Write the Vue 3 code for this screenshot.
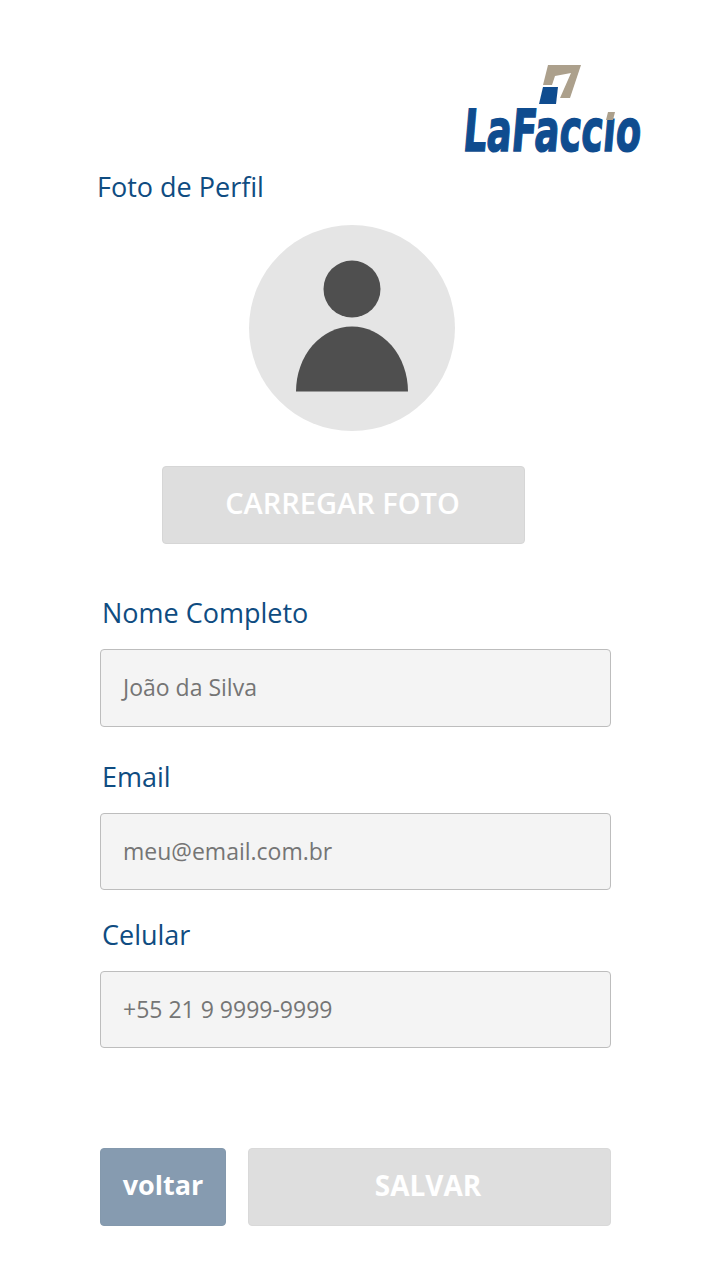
<script setup>
const fields = [
  { label: 'Nome Completo', value: 'João da Silva', cls: 'f-nome' },
  { label: 'Email', value: 'meu@email.com.br', cls: 'f-email' },
  { label: 'Celular', value: '+55 21 9 9999-9999', cls: 'f-cel' },
]
</script>

<template>
  <div class="page">
    <div class="logo-row">
      <svg class="logo" width="176" height="90" viewBox="0 0 176 90">
        <path d="M83 1H116L105 34H95L106 9L90 12L87 21H78Z" fill="#aca08c" />
        <path d="M78 23H93L91 40H74Z" fill="#0f4c8f" />
        <text class="logo-text" transform="matrix(0.635 0 -0.087 1 -3 87)">LaFaccıo</text>
        <path d="M143 48H150L148 56H141Z" fill="#aca08c" />
      </svg>
    </div>

    <div class="photo-label">Foto de Perfil</div>

    <div class="avatar">
      <svg width="114" height="132" viewBox="0 0 114 132">
        <circle cx="57" cy="29" r="28.5" fill="#4f4f4f" />
        <path d="M1 131.5A56 65 0 0 1 113 131.5Z" fill="#4f4f4f" />
      </svg>
    </div>

    <button class="upload" type="button">CARREGAR FOTO</button>

    <div v-for="f in fields" :key="f.label" class="field" :class="f.cls">
      <label>{{ f.label }}</label>
      <div class="input">{{ f.value }}</div>
    </div>

    <div class="actions">
      <button class="back" type="button">voltar</button>
      <button class="save" type="button">SALVAR</button>
    </div>
  </div>
</template>

<style scoped>
.page {
  width: 720px;
  height: 1280px;
  box-sizing: border-box;
  padding: 64px 109px 0 100px;
  background: #fff;
  font-family: "Open Sans", "Noto Sans", sans-serif;
}

.logo-row {
  display: flex;
  justify-content: flex-end;
  margin-right: -30px;
  height: 90px;
}

.logo {
  overflow: visible;
}

.logo-text {
  font-family: "DejaVu Sans", sans-serif;
  font-size: 58px;
  font-weight: 700;
  fill: #0f4c8f;
  stroke: #0f4c8f;
  stroke-width: 1.5px;
}

.photo-label {
  margin: 17px 0 0 -3px;
  font-size: 27px;
  line-height: 32px;
  color: #0f4c81;
}

.avatar {
  width: 206px;
  height: 206px;
  margin: 22px 0 0 149px;
  border-radius: 50%;
  background: #e5e5e5;
  display: flex;
  justify-content: center;
  padding-top: 35px;
  box-sizing: border-box;
}

.upload {
  display: block;
  width: 363px;
  height: 78px;
  margin: 35px 0 0 62px;
  padding: 0 2px 6px 0;
  border: 1px solid #d6d6d6;
  border-radius: 4px;
  background: #dedede;
  color: #fff;
  font-family: inherit;
  font-size: 29px;
  font-weight: 600;
}

.field label {
  display: block;
  margin-left: 2px;
  font-size: 27px;
  line-height: 32px;
  color: #0f4c81;
}

.f-nome { margin-top: 53px; }
.f-email { margin-top: 34px; }
.f-cel { margin-top: 29px; }

.input {
  box-sizing: border-box;
  height: 78px;
  margin-top: 20px;
  padding: 0 0 2px 22px;
  display: flex;
  align-items: center;
  border: 1px solid #bdbdbd;
  border-radius: 4px;
  background: #f4f4f4;
  color: #757575;
  font-size: 23px;
}

.f-email .input,
.f-cel .input {
  height: 77px;
}

.actions {
  display: flex;
  gap: 22px;
  margin-top: 100px;
}

.actions button {
  height: 78px;
  padding: 0 0 5px;
  border-radius: 4px;
  color: #fff;
  font-family: inherit;
  font-weight: 700;
}

.back {
  width: 126px;
  border: 1px solid #8499ad;
  background: #869bb0;
  font-size: 27px;
}

.save {
  flex: 1;
  padding-right: 3px !important;
  border: 1px solid #d9d9d9;
  background: #dedede;
  font-size: 28px;
}
</style>
